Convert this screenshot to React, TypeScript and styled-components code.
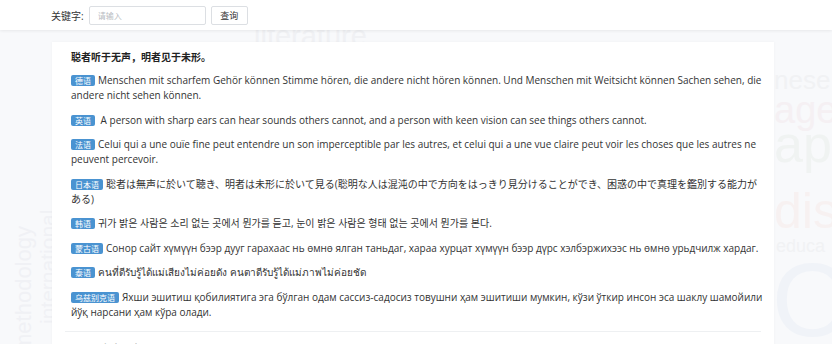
import React from "react";
import styled, { createGlobalStyle } from "styled-components";

const GlobalStyle = createGlobalStyle`
  html, body { margin: 0; padding: 0; }
  body {
    background: #f8f9fb;
    font-family: "Open Sans", "Noto Sans CJK SC", sans-serif;
    color: #333;
    overflow: hidden;
  }
`;

const Page = styled.div`
  position: relative;
  width: 832px;
  height: 344px;
  overflow: hidden;
`;

/* decorative faint words scattered on the page background */
const Watermarks = styled.div`
  position: absolute;
  inset: 0;
  z-index: 0;
  pointer-events: none;
  overflow: hidden;
`;

const Word = styled.span<{ $x: number; $y: number; $size: number; $color: string; $rotate?: boolean }>`
  position: absolute;
  left: ${(p) => p.$x}px;
  top: ${(p) => p.$y}px;
  font-family: "Liberation Sans", sans-serif;
  font-size: ${(p) => p.$size}px;
  line-height: 1;
  color: ${(p) => p.$color};
  white-space: nowrap;
  transform-origin: 0 0;
  transform: ${(p) => (p.$rotate ? "rotate(-90deg)" : "none")};
`;

const Header = styled.header`
  position: relative;
  z-index: 2;
  height: 30px;
  background: #fff;
  box-shadow: 0 1px 3px rgba(0, 0, 0, 0.07);
  display: flex;
  align-items: center;
  padding-left: 51px;
  gap: 5px;
`;

const Label = styled.span`
  font-size: 10px;
  color: #333;
`;

const Input = styled.input`
  box-sizing: border-box;
  width: 117px;
  height: 19px;
  border: 1px solid #dcdfe3;
  border-radius: 2px;
  padding: 0 8px;
  font-size: 8px;
  font-family: "Noto Sans CJK SC", sans-serif;
  outline: none;
  &::placeholder { color: #b8bcc2; }
`;

const Button = styled.button`
  box-sizing: border-box;
  width: 37px;
  height: 19px;
  border: 1px solid #dcdfe3;
  border-radius: 2px;
  background: #fff;
  font-size: 9px;
  font-family: "Noto Sans CJK SC", sans-serif;
  color: #333;
  padding: 0;
`;

const Main = styled.main`
  position: relative;
  z-index: 1;
  padding: 12px 0 0 52px;
`;

const Card = styled.section`
  width: 722px;
  box-sizing: border-box;
  background: #fff;
  box-shadow: 0 0 3px rgba(0, 0, 0, 0.04);
  padding: 7px 8px 0 13px;
`;

const Entry = styled.article<{ $last?: boolean }>`
  padding: 0 0 11px 6px;
  margin-right: 5px;
  border-bottom: ${(p) => (p.$last ? "none" : "1px solid #eef0f2")};
  margin-bottom: 9px;
`;

const Body = styled.div`
  margin-right: -5px;
`;

const Title = styled.h3`
  margin: 0 0 9px;
  font-size: 10px;
  line-height: 15px;
  font-weight: 700;
  color: #222;
  font-family: "Noto Sans CJK SC", sans-serif;
`;

const Line = styled.p`
  margin: 0 0 9.5px;
  font-size: 10px;
  line-height: 15px;
  color: #333;
  &:last-child { margin-bottom: 0; }
  &:lang(ja) { font-family: "Open Sans", "Noto Sans CJK JP", sans-serif; }
  &:lang(ko) { font-family: "Open Sans", "Noto Sans CJK KR", sans-serif; }
`;

const Tag = styled.span`
  display: inline-block;
  height: 11px;
  line-height: 11px;
  padding: 0 4px;
  margin-right: 3px;
  font-size: 8px;
  font-family: "Noto Sans CJK SC", sans-serif;
  color: #fff;
  background: #4a93d1;
  border-radius: 2px;
`;

const entries = [
  { tag: "德语", lang: "de", text: "Menschen mit scharfem Gehör können Stimme hören, die andere nicht hören können. Und Menschen mit Weitsicht können Sachen sehen, die andere nicht sehen können." },
  { tag: "英语", lang: "en", text: "\u00a0A person with sharp ears can hear sounds others cannot, and a person with keen vision can see things others cannot." },
  { tag: "法语", lang: "fr", text: "Celui qui a une ouïe fine peut entendre un son imperceptible par les autres, et celui qui a une vue claire peut voir les choses que les autres ne peuvent percevoir." },
  { tag: "日本语", lang: "ja", text: "聡者は無声に於いて聴き、明者は未形に於いて見る(聡明な人は混沌の中で方向をはっきり見分けることができ、困惑の中で真理を鑑別する能力がある)" },
  { tag: "韩语", lang: "ko", text: "귀가 밝은 사람은 소리 없는 곳에서 뭔가를 듣고, 눈이 밝은 사람은 형태 없는 곳에서 뭔가를 본다." },
  { tag: "蒙古语", lang: "mn", text: "Сонор сайт хүмүүн бээр дууг гарахаас нь өмнө ялган таньдаг, хараа хурцат хүмүүн бээр дүрс хэлбэржихээс нь өмнө урьдчилж хардаг." },
  { tag: "泰语", lang: "th", text: "คนที่ดีรับรู้ได้แม่เสียงไม่ค่อยดัง คนตาดีรับรู้ได้แม่ภาพไม่ค่อยชัด" },
  { tag: "乌兹别克语", lang: "uz", text: "Яхши эшитиш қобилиятига эга бўлган одам сассиз-садосиз товушни ҳам эшитиши мумкин, кўзи ўткир инсон эса шаклу шамойили йўқ нарсани ҳам кўра олади." },
];

const words = [
  { t: "literature", x: 254, y: 22, s: 29, c: "#f0f1f4" },
  { t: "nese", x: 774, y: 67, s: 26, c: "#f1f2f4" },
  { t: "age", x: 774, y: 91, s: 38, c: "#f5f0f3" },
  { t: "app", x: 774, y: 118, s: 52, c: "#f0f3f2" },
  { t: "dis", x: 774, y: 186, s: 50, c: "#f7f1f1" },
  { t: "educa", x: 776, y: 237, s: 18, c: "#f1f2f4" },
  { t: "O", x: 772, y: 248, s: 104, c: "#f0f3f8" },
];

export default function App() {
  return (
    <Page>
      <GlobalStyle />
      <Watermarks aria-hidden>
        {words.map((w) => (
          <Word key={w.t} $x={w.x} $y={w.y} $size={w.s} $color={w.c}>{w.t}</Word>
        ))}
        <Word $x={13} $y={352} $size={22} $color="#f0f1f5" $rotate>methodology</Word>
        <Word $x={37} $y={324} $size={21} $color="#f0f1f5" $rotate>international</Word>
      </Watermarks>
      <Header>
        <Label>关键字:</Label>
        <Input placeholder="请输入" />
        <Button>查询</Button>
      </Header>
      <Main>
        <Card>
          <Entry>
            <Title>聪者听于无声，明者见于未形。</Title>
            <Body>
              {entries.map((e) => (
                <Line key={e.tag} lang={e.lang}>
                  <Tag>{e.tag}</Tag>
                  {e.text}
                </Line>
              ))}
            </Body>
          </Entry>
          <Entry $last>
            <Title>行百里者半九十。</Title>
          </Entry>
        </Card>
      </Main>
    </Page>
  );
}
